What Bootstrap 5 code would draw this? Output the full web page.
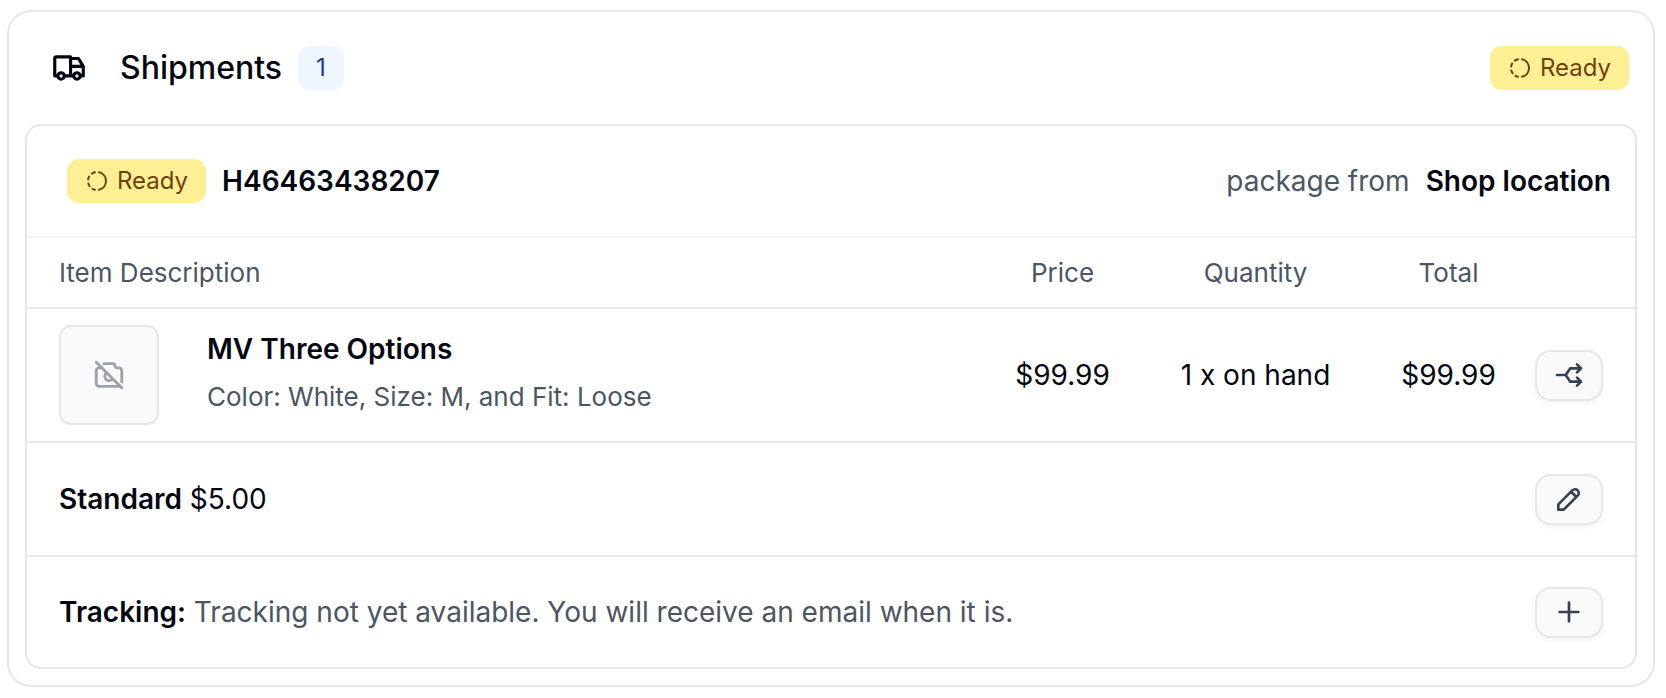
<!DOCTYPE html>
<html lang="en">
<head>
<meta charset="utf-8">
<meta name="viewport" content="width=device-width, initial-scale=1">
<title>Shipments</title>
<link href="https://cdn.jsdelivr.net/npm/bootstrap@5.3.0/dist/css/bootstrap.min.css" rel="stylesheet">
<style>
  body { font-family: Inter, "Liberation Sans", sans-serif; font-size: 28px; line-height: 40px; color: #030712; background: #fff; }
  svg { fill: none; stroke: currentColor; stroke-width: 2; stroke-linecap: round; stroke-linejoin: round; flex-shrink: 0; }
  .page { padding: 10px 11px 11px 7px; }
  .panel { border: 2px solid #e5e7eb; border-radius: 24px; padding: 0 16px 16px; }
  .panel-head { min-height: 112px; padding: 0 8px 0 25px; }
  .panel-title { font-size: 32px; line-height: 40px; font-weight: 500; margin: 0 16px 0 32px; }
  .pill { display: inline-flex; align-items: center; gap: 8px; height: 44px; padding: 0 18px; border-radius: 12px; font-size: 24px; line-height: 32px; }
  .pill-ready { background: #fdf094; color: #713f12; }
  .pill-count { background: #eff6ff; color: #1e3a8a; }
  .parcel { border: 2px solid #e5e7eb; border-radius: 16px; }
  .parcel-head { min-height: 112px; padding: 0 24px 0 40px; border-bottom: 2px solid #f3f4f6; }
  .soft { color: #4b5563; }
  .strong { font-weight: 600; }
  .items { --bs-table-bg: transparent; --bs-table-color: #030712; color: #030712; }
  .items > :not(caption) > * > * { padding: 0; border-bottom: 2px solid #e5e7eb; vertical-align: middle; }
  .items thead th { height: 70px; font-size: 26px; font-weight: 400; color: #4b5563; }
  .items tbody td { height: 134px; }
  .items tr > :first-child { padding-left: 32px; }
  .items tr > :last-child { padding-right: 32px; }
  .col-money { width: 165px; }
  .col-qty { width: 221px; }
  .col-act { width: 104px; }
  .thumb { width: 100px; height: 100px; border: 2px solid #e5e7eb; border-radius: 12px; background: #fafafa; color: #9ca3af; flex-shrink: 0; }
  .options { font-size: 26px; }
  .tool { width: 68px; height: 51px; padding: 0; border: 2px solid #e5e7eb; border-radius: 16px; background: #fafafa; color: #374151; box-shadow: 0 2px 4px rgba(0, 0, 0, .05); }
  .foot { min-height: 110px; padding: 0 32px; }
  .ruled { border-bottom: 2px solid #e5e7eb; min-height: 114px; }
</style>
</head>
<body>
<svg class="d-none">
  <symbol id="progress" viewBox="0 0 24 24">
    <path d="M10 20.777a8.942 8.942 0 0 1 -2.48 -.969M14 3.223a9.003 9.003 0 0 1 0 17.554M4.579 17.093a8.961 8.961 0 0 1 -1.227 -2.592M3.124 10.5c.16 -.95 .468 -1.85 .9 -2.675l.169 -.305M6.907 4.579a8.954 8.954 0 0 1 3.093 -1.356"/>
  </symbol>
</svg>
<main class="page">
  <section class="panel">
    <header class="panel-head d-flex align-items-center">
      <svg width="38" height="38" viewBox="0 0 24 24" aria-hidden="true"><path d="M5 17a2 2 0 1 0 4 0a2 2 0 1 0 -4 0M15 17a2 2 0 1 0 4 0a2 2 0 1 0 -4 0M5 17h-2v-11a1 1 0 0 1 1 -1h9v12m-4 0h6m4 0h2v-6h-8m0 -5h5l3 5"/></svg>
      <h1 class="panel-title">Shipments</h1>
      <span class="pill pill-count">1</span>
      <span class="pill pill-ready ms-auto"><svg width="24" height="24" aria-hidden="true"><use href="#progress"/></svg>Ready</span>
    </header>
    <div class="parcel">
      <div class="parcel-head d-flex align-items-center gap-3">
        <span class="pill pill-ready"><svg width="24" height="24" aria-hidden="true"><use href="#progress"/></svg>Ready</span>
        <span class="strong">H46463438207</span>
        <span class="soft ms-auto">package from</span>
        <span class="strong">Shop location</span>
      </div>
      <table class="table items mb-0">
        <thead>
          <tr>
            <th scope="col">Item Description</th>
            <th scope="col" class="col-money text-center">Price</th>
            <th scope="col" class="col-qty text-center">Quantity</th>
            <th scope="col" class="col-money text-center">Total</th>
            <th scope="col" class="col-act" aria-label="Actions"></th>
          </tr>
        </thead>
        <tbody>
          <tr>
            <td>
              <div class="d-flex align-items-center gap-5">
                <div class="thumb d-flex align-items-center justify-content-center">
                  <svg width="34" height="34" viewBox="0 0 24 24" aria-hidden="true"><path d="M8.297 4.289a.997 .997 0 0 1 .703 -.289h6a1 1 0 0 1 1 1a2 2 0 0 0 2 2h1a2 2 0 0 1 2 2v8m-1.187 2.828c-.249 .11 -.524 .172 -.813 .172h-14a2 2 0 0 1 -2 -2v-9a2 2 0 0 1 2 -2h1c.298 0 .58 -.065 .834 -.181M10.422 10.448a3 3 0 1 0 4.15 4.098M3 3l18 18"/></svg>
                </div>
                <div class="d-flex flex-column gap-2 pb-1">
                  <span class="strong">MV Three Options</span>
                  <span class="soft options">Color: White, Size: M, and Fit: Loose</span>
                </div>
              </div>
            </td>
            <td class="text-center">$99.99</td>
            <td class="text-center">1 x on hand</td>
            <td class="text-center">$99.99</td>
            <td class="text-end">
              <button type="button" class="btn tool d-inline-flex align-items-center justify-content-center align-middle" aria-label="Split"><svg width="32" height="32" viewBox="0 0 24 24"><path d="M21 17h-8l-3.5 -5h-6.5M21 7h-8l-3.495 5M18 10l3 -3l-3 -3M18 20l3 -3l-3 -3"/></svg></button>
            </td>
          </tr>
        </tbody>
      </table>
      <div class="foot ruled d-flex align-items-center justify-content-between">
        <div><span class="strong">Standard</span> $5.00</div>
        <button type="button" class="btn tool d-inline-flex align-items-center justify-content-center" aria-label="Edit"><svg width="32" height="32" viewBox="0 0 24 24"><path d="M4 20h4l10.5 -10.5a2.828 2.828 0 1 0 -4 -4l-10.5 10.5v4M13.5 6.5l4 4"/></svg></button>
      </div>
      <div class="foot d-flex align-items-center justify-content-between">
        <div><span class="strong">Tracking:</span> <span class="soft">Tracking not yet available. You will receive an email when it is.</span></div>
        <button type="button" class="btn tool d-inline-flex align-items-center justify-content-center" aria-label="Add"><svg width="32" height="32" viewBox="0 0 24 24"><path d="M12 5v14M5 12h14"/></svg></button>
      </div>
    </div>
  </section>
</main>
<script src="https://cdn.jsdelivr.net/npm/bootstrap@5.3.0/dist/js/bootstrap.bundle.min.js"></script>
</body>
</html>
